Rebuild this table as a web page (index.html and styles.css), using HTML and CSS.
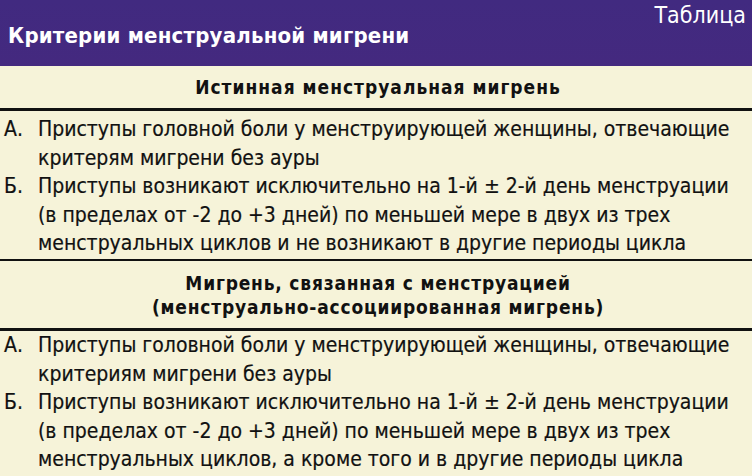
FILE: index.html
```html
<!DOCTYPE html>
<html lang="ru">
<head>
<meta charset="utf-8">
<link rel="stylesheet" href="styles.css">
</head>
<body>
<div class="table">
  <header class="head">
    <div class="label">Таблица</div>
    <h1 class="title">Критерии менструальной мигрени</h1>
  </header>
  <section class="sec-head one">
    <div>Истинная менструальная мигрень</div>
  </section>
  <section class="sec-body">
    <div class="item"><span class="mark">А.</span><span class="txt">Приступы головной боли у менструирующей женщины, отвечающие<br>критерям мигрени без ауры</span></div>
    <div class="item"><span class="mark">Б.</span><span class="txt">Приступы возникают исключительно на 1-й ± 2-й день менструации<br>(в пределах от -2 до +3 дней) по меньшей мере в двух из трех<br>менструальных циклов и не возникают в другие периоды цикла</span></div>
  </section>
  <section class="sec-head two">
    <div>Мигрень, связанная с менструацией</div>
    <div>(менструально-ассоциированная мигрень)</div>
  </section>
  <section class="sec-body last">
    <div class="item"><span class="mark">А.</span><span class="txt">Приступы головной боли у менструирующей женщины, отвечающие<br>критериям мигрени без ауры</span></div>
    <div class="item"><span class="mark">Б.</span><span class="txt">Приступы возникают исключительно на 1-й ± 2-й день менструации<br>(в пределах от -2 до +3 дней) по меньшей мере в двух из трех<br>менструальных циклов, а кроме того и в другие периоды цикла</span></div>
  </section>
</div>
</body>
</html>
```
FILE: styles.css
```css
html, body {
  margin: 0;
  padding: 0;
}
body {
  width: 752px;
  height: 476px;
  overflow: hidden;
  background: #f6f3d9;
  font-family: "Liberation Sans Narrow", "DejaVu Sans Condensed", "Liberation Sans", sans-serif;
  color: #111;
}
.table {
  display: flex;
  flex-direction: column;
}
.head {
  height: 66px;
  background: linear-gradient(180deg, #412a80 0%, #44297f 100%);
  color: #fff;
  position: relative;
  box-sizing: border-box;
}
.label {
  position: absolute;
  right: 6px;
  top: 1px;
  font-size: 23px;
  line-height: 28px;
}
.title {
  margin: 0;
  padding: 22px 0 0 8px;
  font-size: 22px;
  line-height: 28px;
  font-weight: bold;
  letter-spacing: 0.2px;
}
.sec-head {
  text-align: center;
  font-weight: bold;
  font-size: 19px;
  letter-spacing: 1px;
  border-bottom: 3px solid #111;
  box-sizing: border-box;
  padding-left: 4px;
}
.sec-head.one {
  height: 45px;
  line-height: 42px;
}
.sec-head.two {
  height: 70px;
  padding-top: 10px;
  line-height: 24px;
  letter-spacing: 0.8px;
}
.sec-body {
  box-sizing: border-box;
  height: 150px;
  padding: 4px 0 0 4px;
  font-size: 21px;
  line-height: 28.6px;
  white-space: nowrap;
  border-bottom: 2px solid #111;
  -webkit-text-stroke: 0.2px #111;
}
.sec-body.last {
  border-bottom: none;
  padding-top: 0;
}
.item {
  display: flex;
}
.mark {
  width: 34px;
  flex: none;
}
.txt {
  flex: 1;
}
```
